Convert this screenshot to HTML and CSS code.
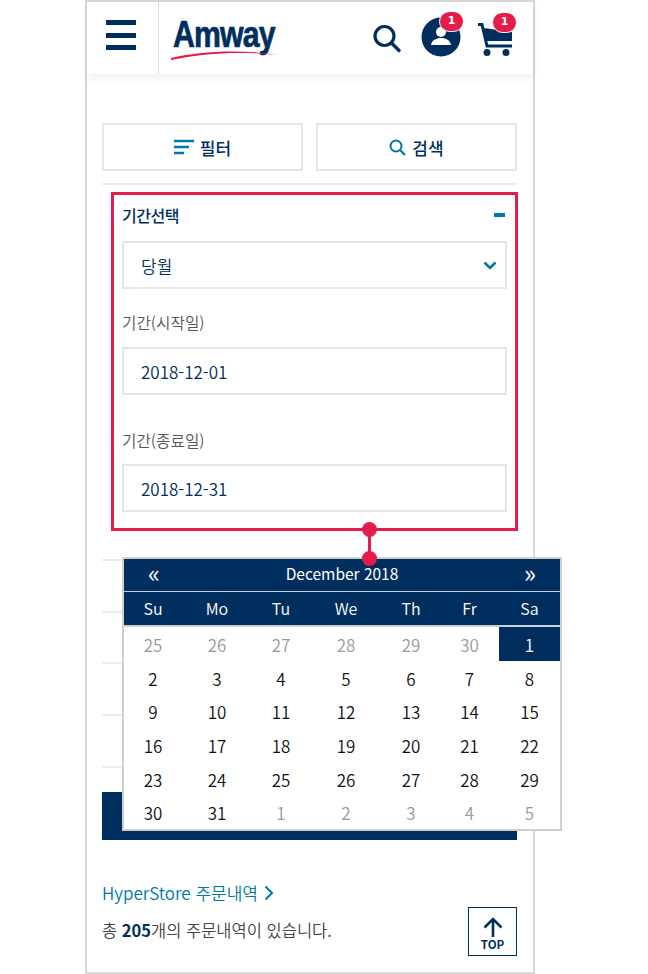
FILE: index.html
```html
<!DOCTYPE html>
<html lang="ko">
<head>
    <meta charset="UTF-8">
    <meta name="viewport" content="width=device-width, initial-scale=1.0">
    <title>Amway 주문내역</title>
    <link rel="stylesheet" href="styles.css">
</head>
<body>
    <div class="phone">
        <header class="top-bar">
            <div class="menu-btn">
                <span></span><span></span><span></span>
            </div>
            <div class="logo">
                <span class="logo-word">Amway</span>
                <svg class="logo-swoosh" width="110" height="14" viewBox="0 0 110 14">
                    <path d="M1 11C30 4 72 2 108 8C72 4 34 6 1 13Z" fill="#e31c4a"/>
                </svg>
            </div>
            <div class="top-icons">
                <svg class="icon-search" width="30" height="30" viewBox="0 0 30 30">
                    <circle cx="12.500" cy="12" r="9.500" fill="none" stroke="#002f5f" stroke-width="3.200"/>
                    <path d="M19.500 19L27 26.500" stroke="#002f5f" stroke-width="3.400" stroke-linecap="round"/>
                </svg>
                <div class="icon-user">
                    <svg width="40" height="40" viewBox="0 0 40 40">
                        <circle cx="20" cy="20" r="19.500" fill="#002f5f"/>
                        <circle cx="20" cy="15" r="5" fill="#fff"/>
                        <path d="M10 28C11 23 15 21 20 21C25 21 29 23 30 28Z" fill="#fff"/>
                    </svg>
                    <span class="badge">1</span>
                </div>
                <div class="icon-cart">
                    <svg width="38" height="38" viewBox="0 0 38 38">
                        <path d="M1 2.500H5L10 24H35" fill="none" stroke="#002f5f" stroke-width="3"/>
                        <path d="M7 6L35 10V19H9Z" fill="#002f5f"/>
                        <circle cx="10" cy="30.500" r="3.500" fill="#002f5f"/>
                        <circle cx="29" cy="30.500" r="3.500" fill="#002f5f"/>
                    </svg>
                    <span class="badge">1</span>
                </div>
            </div>
        </header>

        <main class="content">
            <div class="action-row">
                <button class="action-btn">
                    <svg width="20" height="16" viewBox="0 0 20 16">
                        <path d="M0 2H20M0 8H15M0 14H10" stroke="#0079a8" stroke-width="2.400"/>
                    </svg>
                    필터
                </button>
                <button class="action-btn">
                    <svg width="17" height="17" viewBox="0 0 17 17">
                        <circle cx="7" cy="7" r="5.500" fill="none" stroke="#0079a8" stroke-width="2"/>
                        <path d="M11 11L16 16" stroke="#0079a8" stroke-width="2.200"/>
                    </svg>
                    검색
                </button>
            </div>

            <section class="period-box">
                <div class="period-head">
                    <h2>기간선택</h2>
                    <span class="minus"></span>
                </div>
                <div class="field select-field">
                    당월
                    <svg width="14" height="9" viewBox="0 0 14 9">
                        <path d="M1.500 1.500L7 7L12.500 1.500" fill="none" stroke="#0079a8" stroke-width="2.600"/>
                    </svg>
                </div>
                <label class="field-label">기간(시작일)</label>
                <div class="field">2018-12-01</div>
                <label class="field-label second">기간(종료일)</label>
                <div class="field">2018-12-31</div>
            </section>

            <div class="order-rows">
                <div class="order-row"></div>
                <div class="order-row"></div>
                <div class="order-row"></div>
                <div class="order-row"></div>
                <div class="order-row"></div>
            </div>

            <div class="submit-bar"></div>

            <div class="summary">
                <div>
                    <a class="store-link">HyperStore 주문내역
                        <svg width="10" height="16" viewBox="0 0 10 16">
                            <path d="M1.500 1.500L8 8L1.500 14.500" fill="none" stroke="#0079a8" stroke-width="2"/>
                        </svg>
                    </a>
                    <p class="total">총 <b>205</b>개의 주문내역이 있습니다.</p>
                </div>
                <button class="top-btn">
                    <svg width="20" height="20" viewBox="0 0 20 20">
                        <path d="M10 20V2M1.500 10.500L10 2L18.500 10.500" fill="none" stroke="#002f5f" stroke-width="2.600"/>
                    </svg>
                    <span>TOP</span>
                </button>
            </div>
        </main>

        <!-- annotation connecting the date field to the calendar -->
        <span class="dot dot-a"></span>
        <span class="link-line"></span>

        <div class="calendar">
            <div class="cal-title">
                <span>«</span>
                <span class="cal-month">December 2018</span>
                <span>»</span>
            </div>
            <div class="cal-grid cal-dow">
                <span>Su</span><span>Mo</span><span>Tu</span><span>We</span><span>Th</span><span>Fr</span><span>Sa</span>
            </div>
            <div class="cal-grid cal-days">
                <span class="off">25</span><span class="off">26</span><span class="off">27</span><span class="off">28</span><span class="off">29</span><span class="off">30</span><span class="sel">1</span>
                <span>2</span><span>3</span><span>4</span><span>5</span><span>6</span><span>7</span><span>8</span>
                <span>9</span><span>10</span><span>11</span><span>12</span><span>13</span><span>14</span><span>15</span>
                <span>16</span><span>17</span><span>18</span><span>19</span><span>20</span><span>21</span><span>22</span>
                <span>23</span><span>24</span><span>25</span><span>26</span><span>27</span><span>28</span><span>29</span>
                <span>30</span><span>31</span><span class="off">1</span><span class="off">2</span><span class="off">3</span><span class="off">4</span><span class="off">5</span>
            </div>
        </div>
        <span class="dot dot-b"></span>
    </div>
</body>
</html>
```

FILE: styles.css
```css
* {
    box-sizing: border-box;
}
body {
    margin: 0;
    background: #fff;
    font-family: "Noto Sans CJK KR", "Noto Sans", sans-serif;
    color: #002f5f;
}
.phone {
    position: relative;
    width: 450px;
    height: 974px;
    margin-left: 85px;
    border: 2px solid #d8d8d8;
    overflow: visible;
}

/* top bar */
.top-bar {
    display: flex;
    height: 72px;
    box-shadow: 0 3px 10px rgba(0, 0, 0, 0.07);
}
.menu-btn {
    display: flex;
    flex-direction: column;
    gap: 7.500px;
    width: 72px;
    padding: 18px 0 0 19px;
    border-right: 1px solid #dcdcdc;
}
.menu-btn span {
    display: block;
    width: 30px;
    height: 5px;
    background: #002f5f;
}
.logo {
    position: relative;
    width: 195px;
    padding-left: 14px;
}
.logo-word {
    display: block;
    margin-top: 12px;
    font-family: "Liberation Sans", sans-serif;
    font-size: 36px;
    line-height: 42px;
    font-weight: 700;
    letter-spacing: -1px;
    color: #002f5f;
    -webkit-text-stroke: 0.7px #002f5f;
    transform: scaleX(0.84);
    transform-origin: left;
}
.logo-swoosh {
    position: absolute;
    left: 11px;
    top: 45px;
}
.top-icons {
    display: flex;
    align-items: flex-start;
    flex: 1;
}
.icon-search {
    margin: 22px 0 0 18px;
}
.icon-user {
    position: relative;
    margin: 15px 0 0 19px;
    width: 40px;
    height: 40px;
}
.icon-cart {
    position: relative;
    margin: 20px 0 0 16px;
    width: 38px;
    height: 38px;
}
.badge {
    position: absolute;
    top: -6px;
    left: 18px;
    width: 25px;
    height: 21px;
    border: 1px solid #fff;
    border-radius: 11px;
    background: #e31c4a;
    color: #fff;
    font-family: "DejaVu Sans", sans-serif;
    font-size: 11px;
    font-weight: 700;
    line-height: 18px;
    text-align: center;
}
.icon-cart .badge {
    top: -10px;
    left: 15px;
}

/* page body */
.content {
    padding: 49px 16px 0 15px;
}
.action-row {
    display: flex;
    gap: 13px;
    padding-bottom: 12px;
    border-bottom: 2px solid #ececec;
}
.action-btn {
    display: flex;
    align-items: center;
    justify-content: center;
    gap: 6px;
    width: 201px;
    height: 48px;
    padding: 0;
    background: #fff;
    border: 2px solid #e6e6e6;
    font-family: inherit;
    font-size: 17px;
    font-weight: 500;
    color: #002f5f;
}
.period-box {
    height: 339px;
    margin: 7px -1px 0 9px;
    padding: 0 8px;
    border: 3px solid #e31c4a;
}
.period-head {
    display: flex;
    align-items: center;
    justify-content: space-between;
    height: 46px;
    padding-bottom: 6px;
}
.period-head h2 {
    margin: 0;
    font-size: 16px;
    font-weight: 500;
    letter-spacing: -0.500px;
}
.minus {
    width: 11px;
    height: 4px;
    margin-right: 2px;
    background: #0079a8;
}
.field {
    display: flex;
    align-items: center;
    justify-content: space-between;
    height: 48px;
    padding: 0 17px;
    border: 2px solid #e6e6e6;
    font-size: 17px;
    font-weight: 350;
}
.select-field {
    padding-right: 8px;
}
.field-label {
    display: block;
    height: 58px;
    padding-top: 21px;
    font-size: 15.700px;
    font-weight: 350;
    line-height: 26px;
    color: #555;
}
.field-label.second {
    height: 69px;
    padding-top: 33px;
}

/* rows behind the calendar */
.order-row {
    height: 51.800px;
    border-bottom: 2px solid #ececec;
}
.order-rows {
    margin-top: -22px;
}
.submit-bar {
    height: 48px;
    margin-top: 24px;
    background: #002f5f;
}
.summary {
    display: flex;
    justify-content: space-between;
    align-items: flex-end;
    margin-top: 41px;
}
.store-link {
    display: flex;
    align-items: center;
    gap: 6px;
    margin-top: -2px;
    font-size: 17px;
    font-weight: 350;
    line-height: 28px;
    color: #0079a8;
}
.total {
    margin: 10px 0 13px;
    font-size: 16.500px;
    font-weight: 350;
    line-height: 26px;
    color: #444;
}
.total b {
    color: #002f5f;
}
.top-btn {
    display: flex;
    flex-direction: column;
    align-items: center;
    width: 49px;
    height: 49px;
    padding: 9px 0 0;
    background: #fff;
    border: 1.500px solid #002f5f;
    color: #002f5f;
    font-family: inherit;
}
.top-btn span {
    margin-top: 1px;
    font-size: 11.500px;
    font-weight: 700;
    line-height: 13px;
}

/* annotation */
.dot {
    position: absolute;
    left: 275px;
    width: 15px;
    height: 15px;
    border-radius: 50%;
    background: #e31c4a;
}
.dot-a {
    top: 520px;
}
.dot-b {
    top: 549px;
}
.link-line {
    position: absolute;
    left: 281px;
    top: 528px;
    width: 3px;
    height: 28px;
    background: #e31c4a;
}

/* calendar popup */
.calendar {
    position: absolute;
    left: 35px;
    top: 555px;
    width: 440px;
    height: 274px;
    background: #fff;
    border: 2px solid #d0d0d0;
}
.cal-title {
    display: flex;
    justify-content: space-between;
    align-items: flex-start;
    height: 33px;
    padding: 0 24px;
    background: #002f5f;
    border-bottom: 1px solid #c8d0da;
    color: #fff;
    font-size: 25px;
    line-height: 26px;
}
.cal-month {
    font-size: 15.500px;
    line-height: 29px;
}
.cal-grid {
    display: grid;
    grid-template-columns: 58px 70px 58px 72px 58px 59px 61px;
    text-align: center;
}
.cal-dow {
    height: 35px;
    background: #002f5f;
    color: #fff;
    font-size: 16px;
    font-weight: 350;
    line-height: 32px;
    border-bottom: 2px solid #c8d0da;
}
.cal-days {
    grid-auto-rows: 33.700px;
    color: #111;
    font-size: 17px;
    font-weight: 350;
    line-height: 35px;
}
.off {
    color: #999;
}
.sel {
    background: #002f5f;
    color: #fff;
}
```
